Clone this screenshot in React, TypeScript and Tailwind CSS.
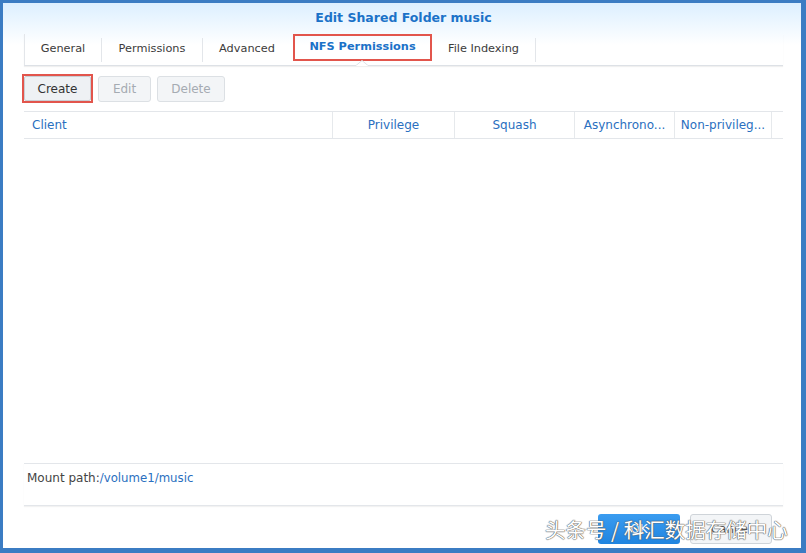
import React from "react";

const tabs = [
  { label: "General", w: "w-[77px]" },
  { label: "Permissions", w: "w-[101px]" },
  { label: "Advanced", w: "w-[88px]" },
  { label: "NFS Permissions", w: "w-[141px]" },
  { label: "File Indexing", w: "w-[104px]" },
];

const columns = [
  { label: "Client", w: "w-[309px]", align: "text-left pl-2" },
  { label: "Privilege", w: "w-[122px]", align: "text-center" },
  { label: "Squash", w: "w-[120px]", align: "text-center" },
  { label: "Asynchrono...", w: "w-[100px]", align: "text-center" },
  { label: "Non-privileg...", w: "w-[97px]", align: "text-center" },
];

export default function App() {
  return (
    <div className="w-[806px] h-[553px] bg-[#3b7cc3] pl-[3px] pt-[3px] font-['DejaVu_Sans',sans-serif] text-[#333]">
      <div className="relative w-[798px] h-[545px] bg-white bg-[linear-gradient(#dcefff_0px,#ffffff_42px)] flex flex-col pl-[21px] pr-[18px]">
        {/* title */}
        <div className="h-[31px] flex items-center justify-center text-[12.5px] font-bold text-[#1b72c8]">
          Edit Shared Folder music
        </div>

        {/* tabs */}
        <div className="relative h-[32px] flex border-b border-[#dde1e6] border-l border-l-[#e3e6ea] shadow-[0_1px_1px_rgba(0,0,0,0.06)]">
          {tabs.map((t) => {
            const active = t.label === "NFS Permissions";
            const sep = t.label !== "Advanced" && !active;
            return (
              <div key={t.label} className={`${t.w} relative flex items-center h-full`}>
                {active ? (
                  <div className="ml-[2px] w-[139px] h-[27px] mt-[-4px] flex items-center justify-center border-2 border-[#e2554c] text-[11.3px] font-bold text-[#1b72c8]">
                    {t.label}
                  </div>
                ) : (
                  <div className="flex-1 text-center text-[11.3px] text-[#3b3b3b]">{t.label}</div>
                )}
                {sep && <div className="w-px h-[24px] bg-[#e3e6ea]" />}
              </div>
            );
          })}
          <svg className="absolute left-[331px] bottom-[-1px]" width="12" height="6" viewBox="0 0 12 6">
            <path d="M0 5.5 L6 0.5 L12 5.5" fill="#fff" stroke="#dde1e6" strokeWidth="1" />
            <rect x="0.5" y="5" width="11" height="1" fill="#fff" />
          </svg>
        </div>

        {/* toolbar */}
        <div className="flex items-center h-[29px] mt-[8px] ml-[-2px]">
          <div className="h-[29px] w-[71px] border-2 border-[#e2554c]">
            <div className="h-full w-full bg-[#eef1f4] border border-[#c9ced4] rounded-[2px] flex items-center justify-center text-[12px] text-[#333]">
              Create
            </div>
          </div>
          <div className="ml-[5px] h-[26px] w-[53px] bg-[#f3f5f7] border border-[#dce0e4] rounded-[3px] flex items-center justify-center text-[12px] text-[#a5abb2]">
            Edit
          </div>
          <div className="ml-[6px] h-[26px] w-[68px] bg-[#f3f5f7] border border-[#dce0e4] rounded-[3px] flex items-center justify-center text-[12px] text-[#a5abb2]">
            Delete
          </div>
        </div>

        {/* table header */}
        <div className="mt-[8px] h-[28px] flex border-t border-b border-[#e3e6ea]">
          {columns.map((c) => (
            <div
              key={c.label}
              className={`${c.w} ${c.align} h-full leading-[27px] border-r border-[#e6e9ec] text-[12px] text-[#2a6fc0] whitespace-nowrap`}
            >
              {c.label}
            </div>
          ))}
          <div className="flex-1" />
        </div>

        <div className="flex-1" />

        {/* mount path */}
        <div className="h-[43px] border-t border-b border-[#e3e6ea] flex items-start pt-[5px] pl-[3px] shadow-[0_1px_1px_rgba(0,0,0,0.05)]">
          <span className="text-[12px] text-[#444]">Mount path:</span>
          <span className="text-[11.75px] text-[#2a6fc0] mt-[1px]">/volume1/music</span>
        </div>

        {/* footer */}
        <div className="h-[42px] flex justify-end items-start pt-[8px] gap-[10px] pr-[11px]">
          <div className="h-[30px] w-[82px] rounded-[3px] bg-[linear-gradient(#3a9cf0,#1f84e0)] flex items-center justify-center text-[12px] text-white">
            OK
          </div>
          <div className="h-[30px] w-[82px] rounded-[3px] bg-[#f3f5f7] border border-[#cfd4d9] flex items-center justify-center text-[12px] text-[#555]">
            Cancel
          </div>
        </div>

        {/* watermark */}
        <div className="absolute left-[542px] top-[511px] text-[20.5px] text-white font-['Noto_Sans_CJK_SC',sans-serif] whitespace-nowrap [text-shadow:0_0_1px_#555,0_0_1px_#555,0_0_1px_#777]">
          头条号 / 科汇数据存储中心
        </div>
      </div>
    </div>
  );
}
